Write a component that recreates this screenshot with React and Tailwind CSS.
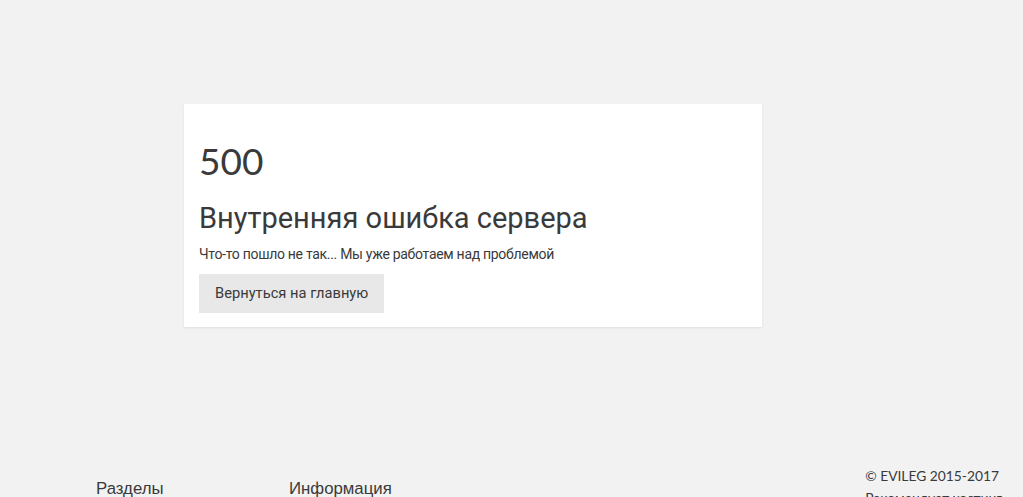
export default function App() {
  return (
    <div className="min-h-[497px] w-full bg-[#f2f2f2] overflow-hidden text-[#333]">
      <div className="pt-[104px] pl-[184px]">
        <div className="w-[578px] bg-white shadow-[0_1px_2px_rgba(0,0,0,0.08)] px-[15px] pt-[33px] pb-[14px]">
          <div className="text-[37px] leading-[48px] font-['Lato',sans-serif] text-[#3a3a3a]">500</div>
          <div className="mt-[15px] text-[29px] leading-[36px] font-['Roboto',sans-serif] text-[#3a3a3a]">Внутренняя ошибка сервера</div>
          <div className="mt-[8px] text-[14px] leading-[20px] font-['Roboto',sans-serif] text-[#3a3a3a] tracking-[-0.3px]">Что-то пошло не так... Мы уже работаем над проблемой</div>
          <div className="mt-[10px] inline-flex h-[39px] items-center bg-[#e8e8e9] px-[16px] text-[14.7px] font-['Roboto',sans-serif] text-[#3a3a3a]">Вернуться на главную</div>
        </div>
      </div>
      <div className="mt-[131px] flex relative">
        <div className="pl-[96px] w-[289px] pt-[21px] text-[16.8px] leading-[20px] font-['Liberation_Sans',sans-serif] text-[#3a3a3a]">Разделы</div>
        <div className="pt-[21px] text-[16.8px] leading-[20px] font-['Liberation_Sans',sans-serif] text-[#3a3a3a]">Информация</div>
        <div className="ml-auto pr-[21px] pt-[7px] text-[13.8px] leading-[22px] font-['Lato',sans-serif] text-[#3a3a3a]">
          <div className="whitespace-nowrap">© EVILEG 2015-2017</div>
          <div className="whitespace-nowrap">Рекомендует хостинг</div>
        </div>
      </div>
    </div>
  );
}
